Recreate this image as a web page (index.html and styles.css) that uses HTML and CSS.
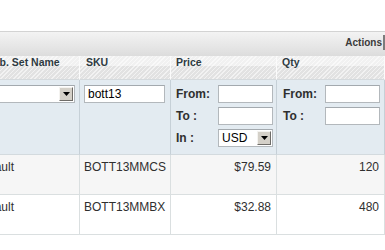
FILE: index.html
```html
<!DOCTYPE html>
<html>
<head>
<meta charset="utf-8">
<link rel="stylesheet" href="styles.css">
</head>
<body>
<div class="page">
  <div class="massaction">
    <span class="ma-label">Actions</span>
    <span class="ma-edge"></span>
  </div>
  <div class="grid">
    <table class="data">
      <thead>
        <tr class="headings">
          <th class="c1">Attrib. Set Name</th>
          <th class="c2">SKU</th>
          <th class="c3">Price</th>
          <th class="c4">Qty</th>
        </tr>
        <tr class="filter">
          <th class="c1">
            <div class="sel sel-wide"><select><option></option></select><span class="sel-btn"><svg width="7" height="4" viewBox="0 0 7 4"><path d="M0 0H7L3.5 4Z" fill="#000"/></svg></span></div>
          </th>
          <th class="c2"><input class="inp inp-sku" type="text" value="bott13"></th>
          <th class="c3">
            <div class="range">
              <span class="lbl">From:</span><input class="inp" type="text">
              <span class="lbl">To :</span><input class="inp" type="text">
              <span class="lbl">In :</span>
              <div class="sel"><select><option>USD</option></select><span class="sel-btn"><svg width="7" height="4" viewBox="0 0 7 4"><path d="M0 0H7L3.5 4Z" fill="#000"/></svg></span></div>
            </div>
          </th>
          <th class="c4 qty">
            <div class="range">
              <span class="lbl">From:</span><input class="inp" type="text">
              <span class="lbl">To :</span><input class="inp" type="text">
            </div>
          </th>
        </tr>
      </thead>
      <tbody>
        <tr class="even">
          <td>Default</td>
          <td>BOTT13MMCS</td>
          <td class="num">$79.59</td>
          <td class="num">120</td>
        </tr>
        <tr>
          <td>Default</td>
          <td>BOTT13MMBX</td>
          <td class="num">$32.88</td>
          <td class="num">480</td>
        </tr>
      </tbody>
    </table>
  </div>
</div>
</body>
</html>
```

FILE: styles.css
```css
html, body {
  margin: 0;
  padding: 0;
  background: #fff;
}
body {
  font-family: "Liberation Sans", Arial, sans-serif;
  font-size: 12px;
  color: #2f2f2f;
  overflow: hidden;
}
.page {
  padding-top: 31px;
  width: 385px;
  overflow: hidden;
}
.massaction {
  height: 24px;
  border-top: 1px solid #d3d3d3;
  background: linear-gradient(#f3f3f3, #e6e6e6 60%, #dcdcdc);
  display: flex;
  justify-content: flex-end;
  align-items: center;
}
.ma-label {
  font-size: 10px;
  font-weight: bold;
  color: #3a3a3a;
  margin-top: -3px;
}
.ma-edge {
  width: 2px;
  height: 15px;
  margin-left: 1px;
  margin-top: -3px;
  background: #7c7c7c;
}
.grid {
  overflow: hidden;
}
table.data {
  table-layout: fixed;
  width: 413px;
  margin-left: -28px;
  border-collapse: separate;
  border-spacing: 0;
}
table.data th, table.data td {
  box-sizing: border-box;
  text-align: left;
  vertical-align: top;
}
.c1 { width: 108px; }
.c2 { width: 91px; }
.c3 { width: 106px; }
.c4 { width: 108px; }

.headings th {
  height: 24px;
  padding: 0 6px 1px;
  vertical-align: middle;
  font-size: 10.5px;
  font-weight: bold;
  color: #2e3b42;
  border-right: 1px solid #fbfbfb;
  border-bottom: 1px solid #d5dadd;
  background:
    repeating-linear-gradient(135deg, rgba(255,255,255,0.55) 0 1px, rgba(255,255,255,0) 1px 3px),
    linear-gradient(#f1f1f1 0, #f1f1f1 45%, #e2e2e2 45%, #e2e2e2 100%);
  white-space: nowrap;
}
.headings th.c3 { padding-left: 5px; }
.headings th.c4 { padding-left: 5px; }

.filter th {
  background: #e3ebf1;
  border-right: 1px solid #c6d0d7;
  border-bottom: 1px solid #d3dade;
  padding: 5px 4px 7px;
  font-weight: bold;
}
.filter th.c3 { padding-left: 5px; }
.filter th.qty { padding-left: 6px; }

.inp {
  box-sizing: border-box;
  height: 18px;
  width: 55px;
  margin: 0;
  padding: 0 3px;
  border: 1px solid #b3b8bc;
  border-top-color: #a3a9ae;
  background: #fff;
  font-family: "Liberation Sans", Arial, sans-serif;
  font-size: 12px;
  color: #000;
  display: block;
}
.inp-sku {
  width: 81px;
}
.range {
  display: grid;
  grid-template-columns: 42px 55px;
  row-gap: 4px;
  align-items: center;
}
.lbl {
  font-size: 12px;
  font-weight: bold;
  color: #2f2f2f;
  white-space: nowrap;
}
.sel {
  box-sizing: border-box;
  height: 18px;
  width: 55px;
  border: 1px solid #b3b8bc;
  border-top-color: #a3a9ae;
  background: #fff;
  display: flex;
  align-items: center;
}
.sel-wide {
  width: 99px;
}
.sel select {
  appearance: none;
  -webkit-appearance: none;
  border: 0;
  background: transparent;
  flex: 1;
  min-width: 0;
  height: 16px;
  padding: 0 0 0 3px;
  margin: 0;
  font-family: "Liberation Sans", Arial, sans-serif;
  font-size: 12px;
  color: #000;
  outline: none;
}
.sel-btn {
  box-sizing: border-box;
  width: 14px;
  height: 14px;
  margin-right: 1px;
  background: #d4d0c8;
  border: 1px solid;
  border-color: #f4f3f0 #6e6c68 #6e6c68 #f4f3f0;
  display: flex;
  align-items: center;
  justify-content: center;
}
.sel-btn svg {
  display: block;
}

tbody td {
  height: 40px;
  padding: 5px 4px 0;
  line-height: 14px;
  font-size: 12px;
  color: #2f2f2f;
  border-right: 1px solid #dadfe0;
  border-bottom: 1px solid #dadfe0;
  background: #fff;
  white-space: nowrap;
}
tbody tr.even td {
  background: #f6f6f6;
}
tbody td.num {
  text-align: right;
  padding-right: 5px;
}
```
